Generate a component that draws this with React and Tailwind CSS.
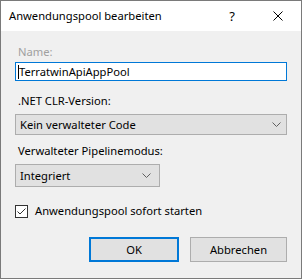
import React from "react";

function Chevron() {
  return (
    <svg width="9" height="5" viewBox="0 0 9 5" className="shrink-0">
      <path d="M0.5 0.5 L4.5 4.5 L8.5 0.5" fill="none" stroke="#606060" strokeWidth="1" />
    </svg>
  );
}

export default function App() {
  return (
    <div
      className="w-[302px] h-[279px] border border-[#7a7a7a] bg-[#f0f0f0] flex flex-col text-[12px] leading-[16px] text-black"
      style={{ fontFamily: '"Noto Sans", "Open Sans", sans-serif' }}
    >
      <div className="h-[30px] bg-white flex items-center pl-[8px] shrink-0">
        <span className="flex-1 text-[11.2px]">Anwendungspool bearbeiten</span>
        <span className="w-[46px] text-center text-[13px]">?</span>
        <span className="w-[46px] flex justify-center">
          <svg width="10" height="10" viewBox="0 0 10 10">
            <path d="M0.5 0.5 L9.5 9.5 M9.5 0.5 L0.5 9.5" stroke="#000" strokeWidth="1" />
          </svg>
        </span>
      </div>
      <div className="flex flex-col px-[14px] pt-[13px] text-[11.2px]">
        <div className="pl-[3px] text-[#a0a0a0]">Name:</div>
        <div className="mt-[2px] h-[19px] border border-[#0078d7] bg-white flex items-center pl-[2px]">
          <span className="w-px h-[14px] bg-black"></span>
          <span>TerratwinApiAppPool</span>
        </div>
        <div className="mt-[12px] pl-[3px]">.NET CLR-Version:</div>
        <div className="mt-[5px] h-[21px] border border-[#adadad] bg-[#e1e1e1] flex items-center pl-[4px] pr-[5px]">
          <span className="flex-1">Kein verwalteter Code</span>
          <Chevron />
        </div>
        <div className="mt-[8px] pl-[3px]">Verwalteter Pipelinemodus:</div>
        <div className="mt-[5px] w-[145px] h-[23px] border border-[#adadad] bg-[#e1e1e1] flex items-center pl-[4px] pr-[8px]">
          <span className="flex-1">Integriert</span>
          <Chevron />
        </div>
        <div className="mt-[16px] flex items-center gap-[7px]">
          <span className="w-[13px] h-[13px] border border-[#333] bg-white flex items-center justify-center">
            <svg width="11" height="11" viewBox="0 0 11 11">
              <path d="M1.5 5.5 L4 8 L9.5 2.5" fill="none" stroke="#333" strokeWidth="1" />
            </svg>
          </span>
          <span>Anwendungspool sofort starten</span>
        </div>
        <div className="mt-[18px] flex justify-end gap-[11px]">
          <div className="w-[90px] h-[25px] border-2 border-[#0078d7] bg-[#e1e1e1] flex items-center justify-center">OK</div>
          <div className="w-[97px] h-[25px] border border-[#adadad] bg-[#e1e1e1] flex items-center justify-center">Abbrechen</div>
        </div>
      </div>
    </div>
  );
}
